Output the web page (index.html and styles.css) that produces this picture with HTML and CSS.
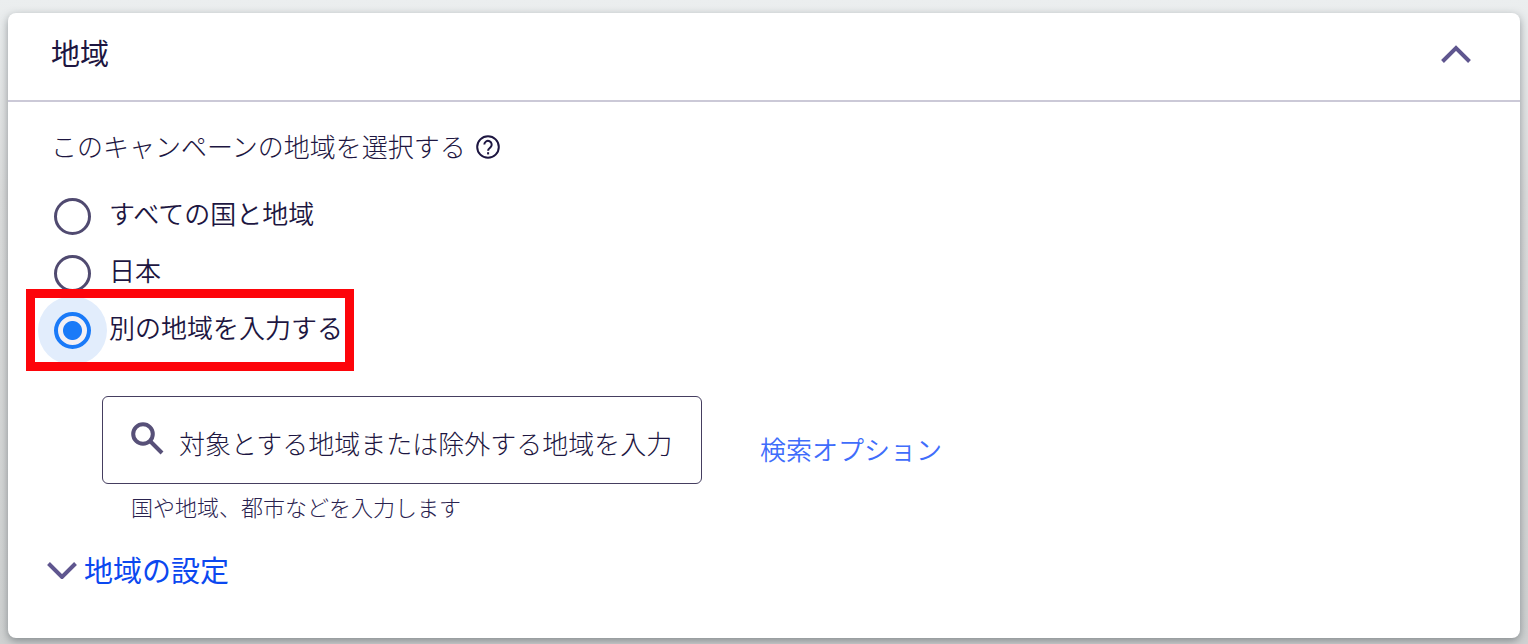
FILE: index.html
```html
<!DOCTYPE html>
<html lang="ja">
<head>
<meta charset="utf-8">
<meta name="viewport" content="width=device-width, initial-scale=1">
<title>地域</title>
<link rel="stylesheet" href="styles.css">
</head>
<body>
<main class="card">
  <header class="card-header">
    <h1 class="card-title">地域</h1>
    <button class="icon-button" type="button" aria-label="折りたたむ">
      <svg class="chevron" viewBox="0 0 32 20" aria-hidden="true"><path d="M2.5 17.5 16 4 29.5 17.5"/></svg>
    </button>
  </header>
  <form class="card-body">
    <div class="prompt">
      <span id="region-label">このキャンペーンの地域を選択する</span>
      <button class="icon-button" type="button" aria-label="ヘルプ">
        <svg class="help" viewBox="0 0 26 26" aria-hidden="true"><circle cx="13" cy="13" r="10.8"/><path d="M9.3 10.6a3.7 3.7 0 1 1 6.1 2.8c-1.5 1.2-2.3 1.8-2.3 3.4"/><path d="M13.1 18.2v2.2"/></svg>
      </button>
    </div>
    <div class="options" role="radiogroup" aria-labelledby="region-label">
      <label class="option"><input class="radio" type="radio" name="region"><span>すべての国と地域</span></label>
      <label class="option"><input class="radio" type="radio" name="region"><span>日本</span></label>
      <label class="option option-marked"><input class="radio" type="radio" name="region" checked><span>別の地域を入力する</span></label>
    </div>
    <div class="search-row">
      <div class="search-box">
        <svg class="search-icon" viewBox="0 0 34 34" aria-hidden="true"><circle cx="12" cy="12" r="9.8"/><path d="M19 19 31 31"/></svg>
        <input class="search-input" id="search" type="text" aria-label="地域を検索" aria-describedby="hint" placeholder="対象とする地域または除外する地域を入力">
      </div>
      <a class="search-link" href="#">検索オプション</a>
    </div>
    <p class="hint" id="hint">国や地域、都市などを入力します</p>
    <button class="settings" type="button">
      <svg class="chevron" viewBox="0 0 32 20" aria-hidden="true"><path d="M2.5 4.5 16 18 29.5 4.5"/></svg>
      <span>地域の設定</span>
    </button>
  </form>
</main>
</body>
</html>
```
FILE: styles.css
```css
* {
  box-sizing: border-box;
}

body {
  margin: 0;
  min-height: 100vh;
  padding: 13px 8px 6px;
  display: flex;
  background: linear-gradient(#ebeeef, #dcdddd 30%, #d0d2d2);
  color: #1d1641;
  font-family: "Noto Sans CJK JP", sans-serif;
  font-size: 26px;
  font-weight: 300;
  line-height: 36px;
}

button,
input {
  font: inherit;
  color: inherit;
}

button {
  padding: 0;
  border: 0;
  background: none;
  cursor: pointer;
}

.card {
  flex: 1;
  min-width: 0;
  background: #fff;
  border-radius: 8px;
  box-shadow: 0 3px 8px rgba(60, 70, 75, 0.5);
}

.card-header {
  display: flex;
  align-items: center;
  justify-content: space-between;
  height: 89px;
  padding: 0 48px 6px 43px;
  border-bottom: 2px solid #cbc9d7;
}

.card-title {
  margin: 0;
  padding-bottom: 4px;
  font-size: 29px;
  font-weight: 400;
}

.icon-button {
  display: flex;
}

.chevron {
  width: 32px;
  height: 20px;
  fill: none;
  stroke: #5f568f;
  stroke-width: 4;
}

.card-body {
  padding: 26px 40px 32px 43px;
}

.prompt {
  display: flex;
  align-items: center;
  gap: 9px;
}

.prompt .icon-button {
  padding-top: 2px;
}

.help {
  width: 26px;
  height: 26px;
  fill: none;
  stroke: #1d1641;
  stroke-width: 2;
}

.options {
  display: grid;
  justify-items: start;
  margin-top: 24px;
  font-weight: 350;
}

.option {
  position: relative;
  display: flex;
  align-items: center;
  gap: 18px;
  height: 57px;
  padding-left: 3px;
}

.option span {
  padding-bottom: 8px;
}

.radio {
  appearance: none;
  flex: none;
  width: 37px;
  height: 37px;
  margin: 0;
  border: 3px solid #504a70;
  border-radius: 50%;
  background: #fff;
}

.radio:checked {
  border: 4px solid #1a7af8;
  background: radial-gradient(circle, #1a7af8 9px, #f3f0f5 10px);
  box-shadow: 0 0 0 16px #e2edfc;
}

.option-marked::after {
  content: "";
  position: absolute;
  top: -13px;
  bottom: -12px;
  left: -25px;
  right: -11px;
  border: 9px solid #fd040a;
}

.search-row {
  display: flex;
  align-items: center;
  gap: 58px;
  margin: 37px 0 0 51px;
}

.search-box {
  flex: 0 1 600px;
  min-width: 0;
  display: flex;
  align-items: center;
  gap: 14px;
  height: 88px;
  padding: 0 16px 0 28px;
  border: 1px solid #453e60;
  border-radius: 6px;
}

.search-icon {
  flex: none;
  width: 34px;
  height: 34px;
  margin-bottom: 2px;
  fill: none;
  stroke: #575078;
  stroke-width: 4;
}

.search-input {
  flex: 1;
  min-width: 0;
  height: 48px;
  padding: 4px 0 0;
  border: 0;
  outline: 0;
  background: none;
}

.search-input::placeholder {
  color: #1d1641;
  opacity: 1;
}

.search-link {
  padding-top: 18px;
  font-weight: 350;
  color: #3f6dfb;
  text-decoration: none;
}

.hint {
  margin: 6px 0 0 80px;
  font-size: 22px;
  line-height: 32px;
  color: #2a2350;
}

.settings {
  display: flex;
  align-items: center;
  gap: 6px;
  margin: 29px 0 0 -5px;
  font-size: 29px;
  font-weight: 400;
  color: #0b48f0;
}
```
